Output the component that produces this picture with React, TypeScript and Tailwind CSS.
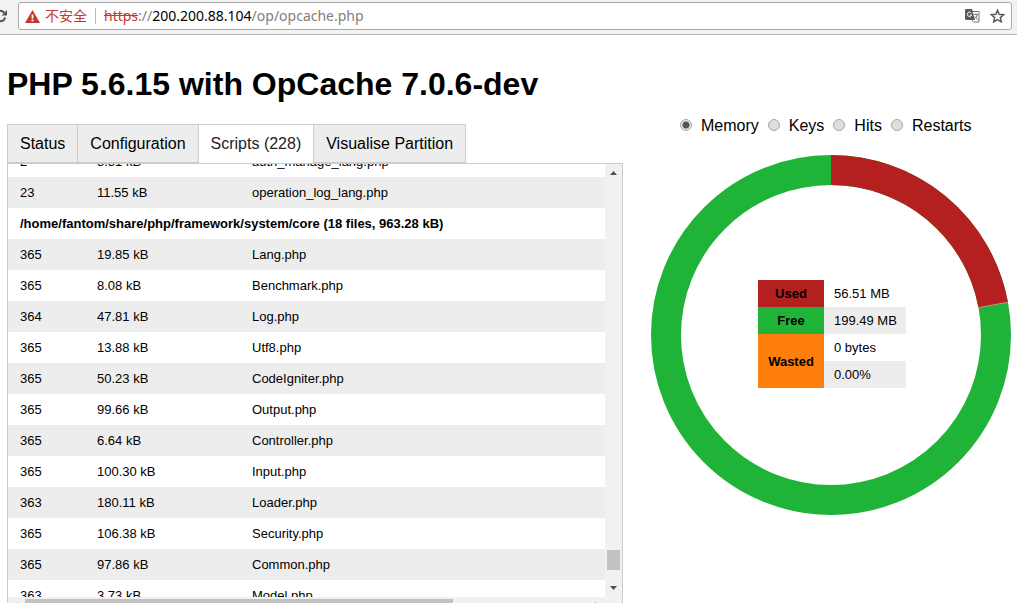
import { useState } from 'react';

type Row = { hits: string; size: string; name: string } | { group: string };

const rows: Row[] = [
  { hits: '2', size: '8.81 kB', name: 'auth_manage_lang.php' },
  { hits: '23', size: '11.55 kB', name: 'operation_log_lang.php' },
  { group: '/home/fantom/share/php/framework/system/core (18 files, 963.28 kB)' },
  { hits: '365', size: '19.85 kB', name: 'Lang.php' },
  { hits: '365', size: '8.08 kB', name: 'Benchmark.php' },
  { hits: '364', size: '47.81 kB', name: 'Log.php' },
  { hits: '365', size: '13.88 kB', name: 'Utf8.php' },
  { hits: '365', size: '50.23 kB', name: 'CodeIgniter.php' },
  { hits: '365', size: '99.66 kB', name: 'Output.php' },
  { hits: '365', size: '6.64 kB', name: 'Controller.php' },
  { hits: '365', size: '100.30 kB', name: 'Input.php' },
  { hits: '363', size: '180.11 kB', name: 'Loader.php' },
  { hits: '365', size: '106.38 kB', name: 'Security.php' },
  { hits: '365', size: '97.86 kB', name: 'Common.php' },
  { hits: '363', size: '3.73 kB', name: 'Model.php' },
];

const tabs = ['Status', 'Configuration', 'Scripts (228)', 'Visualise Partition'];
const datasets = ['Memory', 'Keys', 'Hits', 'Restarts'];

function AddressBar() {
  return (
    <header className="flex h-[35px] shrink-0 border-b border-[#b6b6b6] bg-[#f2f2f2] pt-[2px] pr-[5px]">
      <button type="button" aria-label="Reload" className="flex h-7 w-[18px] shrink-0 items-center overflow-hidden">
        <svg width="8" height="16" viewBox="0 0 8 16" fill="none">
          <path d="M0 2.700c1.700 0 3.200.8 4.300 2.100M0 13.300c2.400 0 4.500-1.600 5.100-3.800" stroke="#555" strokeWidth="2" />
          <path d="M7 2v5.500H1.500z" fill="#555" />
        </svg>
      </button>
      <div className="flex h-7 min-w-0 flex-1 items-center rounded-[3px] border border-[#a9a9a9] bg-white pr-[6px] pl-[6px] font-['Noto_Sans','Noto_Sans_CJK_SC',sans-serif] text-[14px] leading-5">
        <svg width="15" height="13" viewBox="0 0 15 13" className="shrink-0">
          <path d="M7.500 0 15 13H0z" fill="#c5392b" />
          <path d="M6.600 4.500h1.800v4H6.600zM6.600 9.600h1.800v1.700H6.600z" fill="#fff" />
        </svg>
        <span className="ml-[5px] text-[#c5392b]">不安全</span>
        <span className="mx-[8px] h-4 w-px shrink-0 bg-[#bbb]" />
        <div className="min-w-0 flex-1 truncate text-[#808080]">
          <span className="text-[#c5392b] line-through">https</span>://<span className="text-black">200.200.88.104</span>/op/opcache.php
        </div>
        <button type="button" aria-label="Translate this page">
          <svg width="15" height="14" viewBox="0 0 15 14" fill="none">
            <path d="M6 2.500h8v10.500H8.500L6 10z" fill="#fff" stroke="#777" />
            <path d="M1 0h6l3 11H1L0 10V1z" fill="#5a5a5a" />
            <path d="M6.300 4A2.200 2.200 0 1 0 6.600 6H4.800" stroke="#fff" strokeWidth="1" />
            <path d="M9 5.500h4M11 4.500v1M12.300 5.500c-.4 2-1.500 3.500-2.800 4.500M10 7.500l3 3.500" stroke="#777" />
          </svg>
        </button>
        <button type="button" aria-label="Bookmark this page" className="ml-[10px]">
          <svg width="15" height="14" viewBox="0 0 15 14" fill="none">
            <path d="M7.500 1.200 9.200 5.300l4.500.4-3.400 2.900 1 4.300-3.800-2.300-3.800 2.300 1-4.300-3.400-2.900 4.500-.4z" stroke="#5a5a5a" strokeWidth="1.500" />
          </svg>
        </button>
      </div>
    </header>
  );
}

function ScriptsTable() {
  return (
    <table className="-mt-[18px] w-full table-fixed border-collapse text-left text-[13px] leading-[15px]">
      <colgroup>
        <col className="w-[77px]" />
        <col className="w-[155px]" />
        <col />
      </colgroup>
      <tbody>
        {rows.map((row, i) => (
          <tr key={i} className="h-[31px] odd:bg-white even:bg-[#ededed]">
            {'group' in row ? (
              <th colSpan={3} className="px-3 py-2 font-bold">{row.group}</th>
            ) : (
              <>
                <td className="px-3 py-2">{row.hits}</td>
                <td className="px-3 py-2">{row.size}</td>
                <td className="px-3 py-2">{row.name}</td>
              </>
            )}
          </tr>
        ))}
      </tbody>
    </table>
  );
}

function MemoryChart() {
  const used = 56.51 / 256;
  const length = 2 * Math.PI * 165;
  return (
    <div className="mt-[19px] grid">
      <svg viewBox="0 0 360 360" className="col-start-1 row-start-1 block w-full">
        <circle cx="180" cy="180" r="165" fill="none" stroke="#1fb437" strokeWidth="30" />
        <circle
          cx="180"
          cy="180"
          r="165"
          fill="none"
          stroke="#b41f1f"
          strokeWidth="30"
          strokeDasharray={`${used * length} ${length}`}
          transform="rotate(-90 180 180)"
        />
        <path d="M327.400 152.600 357 147.100" stroke="#fff" strokeOpacity="0.4" strokeWidth="1" />
      </svg>
      <div className="z-10 col-start-1 row-start-1 flex items-center justify-center pb-[2px] pl-[2px]">
        <table className="w-[148px] table-fixed border-collapse text-[13px] leading-[15px] whitespace-nowrap">
          <tbody>
            <tr className="h-[27px]">
              <th scope="row" className="w-[66px] bg-[#b41f1f]">Used</th>
              <td className="pl-[10px]">56.51 MB</td>
            </tr>
            <tr className="h-[27px]">
              <th scope="row" className="bg-[#1fb437]">Free</th>
              <td className="bg-[#ededed] pl-[10px]">199.49 MB</td>
            </tr>
            <tr className="h-[27px]">
              <th scope="row" rowSpan={2} className="bg-[#ff7f0e]">Wasted</th>
              <td className="pl-[10px]">0 bytes</td>
            </tr>
            <tr className="h-[27px]">
              <td className="bg-[#ededed] pl-[10px]">0.00%</td>
            </tr>
          </tbody>
        </table>
      </div>
    </div>
  );
}

export default function App() {
  const [tab, setTab] = useState('Scripts (228)');
  const [dataset, setDataset] = useState('Memory');

  return (
    <div className="flex h-screen flex-col overflow-hidden bg-white font-['Liberation_Sans',Arial,sans-serif] text-black">
      <AddressBar />
      <main className="flex min-h-0 flex-1 flex-col pr-[6px] pl-[7px]">
        <h1 className="mt-[31px] text-[32px] leading-[36px] font-bold">PHP 5.6.15 with OpCache 7.0.6-dev</h1>
        <div className="flex min-h-0 flex-1 gap-7">
          <section className="mt-[22px] -mb-[11px] flex min-w-0 flex-1 flex-col">
            <nav className="flex h-[39px] shrink-0">
              {tabs.map((name) => (
                <button
                  key={name}
                  type="button"
                  onClick={() => setTab(name)}
                  className={
                    name === tab
                      ? '-ml-px border border-b-0 border-[#ccc] bg-white px-3 text-[16px] leading-[18px] text-[#222] first:ml-0'
                      : '-ml-px border border-[#ccc] bg-[#ededed] px-3 text-[16px] leading-[18px] first:ml-0'
                  }
                >
                  {name}
                </button>
              ))}
            </nav>
            <div className="flex min-h-0 flex-1 flex-col border border-b-0 border-[#ccc]">
              <div className="flex min-h-0 flex-1">
                <div className="min-w-0 flex-1 overflow-hidden">
                  <ScriptsTable />
                </div>
                <div className="flex w-[17px] flex-col items-center bg-[#f1f1f1]">
                  <svg width="17" height="17" viewBox="0 0 17 17"><path d="M5 11h7L8.500 7z" fill="#505050" /></svg>
                  <div className="flex-1" />
                  <div className="h-5 w-[13px] bg-[#c1c1c1]" />
                  <svg width="17" height="27" viewBox="0 0 17 27"><path d="M5 16h7l-3.500 4z" fill="#505050" /></svg>
                </div>
              </div>
              <div className="flex h-[17px] shrink-0 bg-[#f1f1f1]">
                <svg width="17" height="17" viewBox="0 0 17 17"><path d="M10 5v7L6 8.500z" fill="#a3a3a3" /></svg>
                <div className="flex min-w-0 flex-1 py-[2px]">
                  <div className="h-[13px] w-[76%] bg-[#c1c1c1]" />
                </div>
                <svg width="17" height="17" viewBox="0 0 17 17"><path d="M7 5v7l4-3.500z" fill="#505050" /></svg>
                <div className="w-[17px]" />
              </div>
            </div>
          </section>
          <aside className="mt-[14px] w-[360px] shrink-0">
            <form className="flex h-5 items-center gap-[9px] pl-[29px] text-[16px] leading-5">
              {datasets.map((name) => (
                <label key={name} className="flex items-center gap-[9px]">
                  <input
                    type="radio"
                    name="dataset"
                    checked={dataset === name}
                    onChange={() => setDataset(name)}
                    className="mb-[2px] size-3 appearance-none rounded-full border border-[#a8a8a8] bg-[#dedede] checked:bg-[radial-gradient(circle,#555_3px,#e4e4e4_4px)]"
                  />
                  {name}
                </label>
              ))}
            </form>
            <MemoryChart />
          </aside>
        </div>
      </main>
    </div>
  );
}
